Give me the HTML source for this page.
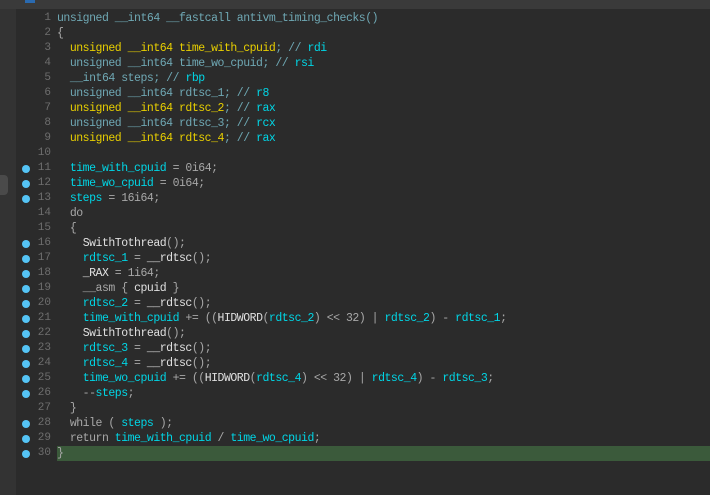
<!DOCTYPE html>
<html><head><style>
body{margin:0;width:710px;height:495px;background:#2b2b2b;overflow:hidden;position:relative;font-family:"Liberation Mono",monospace;}
#top{position:absolute;left:0;top:0;width:710px;height:9px;background:#3a3a3a;}
#top i{position:absolute;left:25px;top:0;width:10px;height:3px;background:#2a6ab0;}
#strip{position:absolute;left:0;top:9px;width:16px;height:486px;background:#333;}
#knob{position:absolute;left:0;top:175px;width:8px;height:20px;background:#4a4a4a;border-radius:0 4px 4px 0;}
#gut{position:absolute;left:16px;top:9px;width:38px;height:486px;background:#2b2b2b;}
#code{position:absolute;left:0;top:11px;width:710px;font-size:11.5px;letter-spacing:-0.48px;line-height:15px;}
.l{height:15px;position:relative;white-space:pre;}
.n{position:absolute;left:30px;width:21px;text-align:right;color:#6e6e6e;letter-spacing:0;font-size:11px;}
.d{position:absolute;left:22px;top:4px;width:8px;height:8px;border-radius:50%;background:#55c4f5;}
.c{position:absolute;left:57px;color:#a8a8a8;}
.hl{position:absolute;left:57px;right:0;top:0;height:15px;background:#3b5a3b;}
.t{color:#6fa8b4}.y{color:#e8cf00}.k{color:#00d6e6}.w{color:#e0e0e0}.g{color:#a8a8a8}
</style></head><body>
<div id="top"><i></i></div><div id="strip"></div><div id="knob"></div><div id="gut"></div>
<div id="code">
<div class="l"><span class="n">1</span><span class="c"><span class="t">unsigned __int64 __fastcall antivm_timing_checks()</span></span></div>
<div class="l"><span class="n">2</span><span class="c">{</span></div>
<div class="l"><span class="n">3</span><span class="c">  <span class="y">unsigned __int64 time_with_cpuid</span><span class="t">; // </span><span class="k">rdi</span></span></div>
<div class="l"><span class="n">4</span><span class="c">  <span class="t">unsigned __int64 time_wo_cpuid; // </span><span class="k">rsi</span></span></div>
<div class="l"><span class="n">5</span><span class="c">  <span class="t">__int64 steps; // </span><span class="k">rbp</span></span></div>
<div class="l"><span class="n">6</span><span class="c">  <span class="t">unsigned __int64 rdtsc_1; // </span><span class="k">r8</span></span></div>
<div class="l"><span class="n">7</span><span class="c">  <span class="y">unsigned __int64 rdtsc_2</span><span class="t">; // </span><span class="k">rax</span></span></div>
<div class="l"><span class="n">8</span><span class="c">  <span class="t">unsigned __int64 rdtsc_3; // </span><span class="k">rcx</span></span></div>
<div class="l"><span class="n">9</span><span class="c">  <span class="y">unsigned __int64 rdtsc_4</span><span class="t">; // </span><span class="k">rax</span></span></div>
<div class="l"><span class="n">10</span></div>
<div class="l"><span class="d"></span><span class="n">11</span><span class="c">  <span class="k">time_with_cpuid</span> = 0i64;</span></div>
<div class="l"><span class="d"></span><span class="n">12</span><span class="c">  <span class="k">time_wo_cpuid</span> = 0i64;</span></div>
<div class="l"><span class="d"></span><span class="n">13</span><span class="c">  <span class="k">steps</span> = 16i64;</span></div>
<div class="l"><span class="n">14</span><span class="c">  do</span></div>
<div class="l"><span class="n">15</span><span class="c">  {</span></div>
<div class="l"><span class="d"></span><span class="n">16</span><span class="c">    <span class="w">SwithTothread</span>();</span></div>
<div class="l"><span class="d"></span><span class="n">17</span><span class="c">    <span class="k">rdtsc_1</span> = <span class="w">__rdtsc</span>();</span></div>
<div class="l"><span class="d"></span><span class="n">18</span><span class="c">    <span class="w">_RAX</span> = 1i64;</span></div>
<div class="l"><span class="d"></span><span class="n">19</span><span class="c">    __asm { <span class="w">cpuid</span> }</span></div>
<div class="l"><span class="d"></span><span class="n">20</span><span class="c">    <span class="k">rdtsc_2</span> = <span class="w">__rdtsc</span>();</span></div>
<div class="l"><span class="d"></span><span class="n">21</span><span class="c">    <span class="k">time_with_cpuid</span> += ((<span class="w">HIDWORD</span>(<span class="k">rdtsc_2</span>) &lt;&lt; 32) | <span class="k">rdtsc_2</span>) - <span class="k">rdtsc_1</span>;</span></div>
<div class="l"><span class="d"></span><span class="n">22</span><span class="c">    <span class="w">SwithTothread</span>();</span></div>
<div class="l"><span class="d"></span><span class="n">23</span><span class="c">    <span class="k">rdtsc_3</span> = <span class="w">__rdtsc</span>();</span></div>
<div class="l"><span class="d"></span><span class="n">24</span><span class="c">    <span class="k">rdtsc_4</span> = <span class="w">__rdtsc</span>();</span></div>
<div class="l"><span class="d"></span><span class="n">25</span><span class="c">    <span class="k">time_wo_cpuid</span> += ((<span class="w">HIDWORD</span>(<span class="k">rdtsc_4</span>) &lt;&lt; 32) | <span class="k">rdtsc_4</span>) - <span class="k">rdtsc_3</span>;</span></div>
<div class="l"><span class="d"></span><span class="n">26</span><span class="c">    --<span class="k">steps</span>;</span></div>
<div class="l"><span class="n">27</span><span class="c">  }</span></div>
<div class="l"><span class="d"></span><span class="n">28</span><span class="c">  while ( <span class="k">steps</span> );</span></div>
<div class="l"><span class="d"></span><span class="n">29</span><span class="c">  return <span class="k">time_with_cpuid</span> / <span class="k">time_wo_cpuid</span>;</span></div>
<div class="l"><span class="hl"></span><span class="d"></span><span class="n">30</span><span class="c">}</span></div>
</div>
</body></html>
